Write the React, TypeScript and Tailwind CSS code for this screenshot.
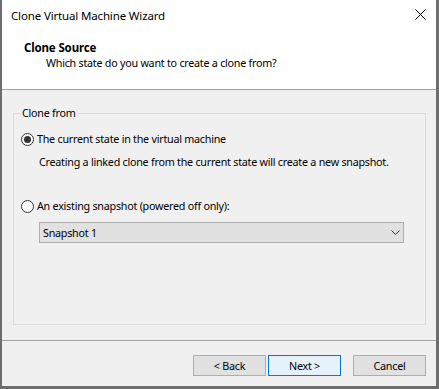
import React from "react";

const font = { fontFamily: '"Noto Sans", "Open Sans", sans-serif' };

function Radio({ checked }: { checked: boolean }) {
  return (
    <span className="relative flex h-[13px] w-[13px] shrink-0 items-center justify-center rounded-full border border-[#333333] bg-white">
      {checked && <span className="h-[7px] w-[7px] rounded-full bg-[#333333]" />}
    </span>
  );
}

function Button({ children, primary }: { children: React.ReactNode; primary?: boolean }) {
  return (
    <div
      className={
        "flex h-[21px] w-[73px] items-center justify-center border leading-[16px] " +
        (primary ? "border-[#0078d7] bg-[#e5f1fb]" : "border-[#adadad] bg-[#e1e1e1]")
      }
    >
      {children}
    </div>
  );
}

export default function App() {
  return (
    <div
      className="flex h-[389px] w-[439px] bg-[#6d6d6d] pb-[3px] pl-[2px] pr-[3px] text-[10.75px] tracking-[-0.25px] text-black"
      style={font}
    >
      <div className="flex h-[386px] w-[434px] flex-col whitespace-nowrap bg-[#f0f0f0]">
        <div className="h-[89px] bg-white">
          <div className="flex h-[31px] items-start justify-between">
            <span className="ml-[9px] mt-[8px] text-[11.5px] leading-[16px] tracking-[-0.15px]">
              Clone Virtual Machine Wizard
            </span>
            <svg className="mr-[10px] mt-[9px]" width="11" height="11" viewBox="0 0 11 11">
              <path d="M0.5 0.5 L10.5 10.5 M10.5 0.5 L0.5 10.5" stroke="#000" strokeWidth="1" fill="none" />
            </svg>
          </div>
          <div className="ml-[22px] mt-[9px] text-[11.5px] font-bold leading-[15px] tracking-[-0.15px]">Clone Source</div>
          <div className="ml-[44px] leading-[16px]">Which state do you want to create a clone from?</div>
        </div>
        <div className="h-px bg-[#a0a0a0]" />
        <fieldset className="ml-[11px] mr-[10px] mt-[15px] h-[220px] border border-[#dcdcdc]">
          <legend className="ml-[6px] px-[2px] leading-[16px]">Clone from</legend>
          <div className="ml-[7px] mt-[10px] flex h-[16px] items-center gap-[3px] leading-[16px]">
            <Radio checked />
            <span>The current state in the virtual machine</span>
          </div>
          <div className="ml-[25px] mt-[7px] leading-[16px]">
            Creating a linked clone from the current state will create a new snapshot.
          </div>
          <div className="ml-[7px] mt-[28px] flex h-[16px] items-center gap-[3px] leading-[16px]">
            <Radio checked={false} />
            <span>An existing snapshot (powered off only):</span>
          </div>
          <div className="ml-[25px] mt-[8px] flex h-[21px] w-[365px] items-center justify-between border border-[#adadad] bg-[#e1e1e1] pl-[3px] pr-[3px] leading-[16px]">
            <span>Snapshot 1</span>
            <svg width="9" height="5" viewBox="0 0 9 5">
              <path d="M0.5 0.5 L4.5 4.5 L8.5 0.5" stroke="#333" strokeWidth="1" fill="none" />
            </svg>
          </div>
        </fieldset>
        <div className="mt-[15px] h-px bg-[#a0a0a0]" />
        <div className="mr-[10px] mt-[14px] flex justify-end">
          <Button>&lt; Back</Button>
          <div className="ml-[2px]">
            <Button primary>Next &gt;</Button>
          </div>
          <div className="ml-[12px]">
            <Button>Cancel</Button>
          </div>
        </div>
      </div>
    </div>
  );
}
